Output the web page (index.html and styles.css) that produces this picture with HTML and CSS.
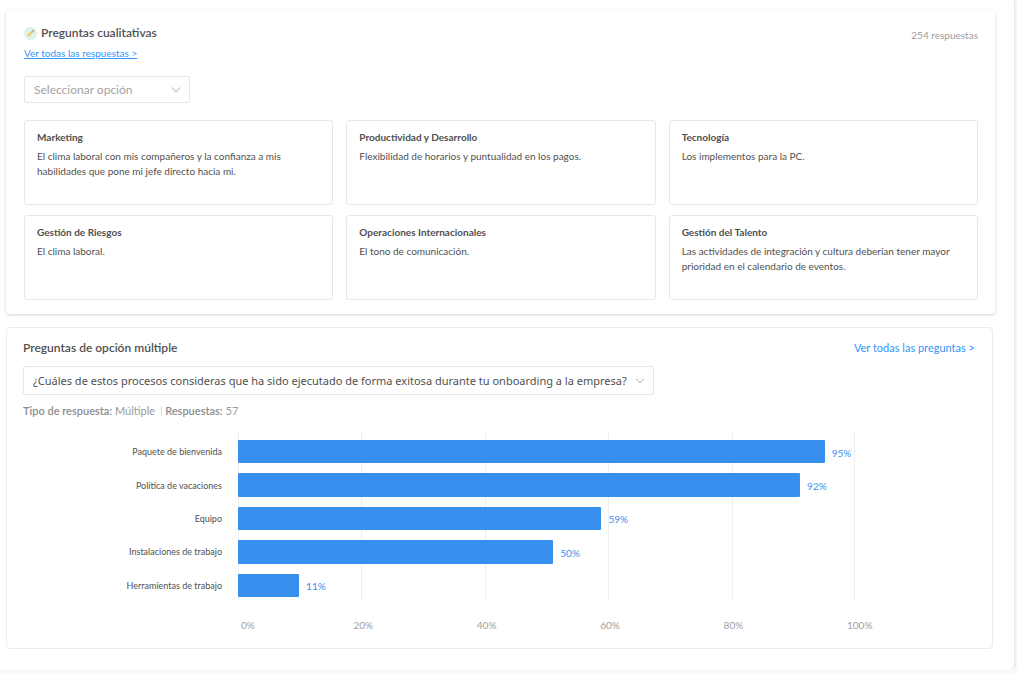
FILE: index.html
```html
<!DOCTYPE html>
<html lang="es">
<head>
<meta charset="utf-8">
<meta name="viewport" content="width=device-width, initial-scale=1">
<title>Resultados de encuesta</title>
<link rel="stylesheet" href="styles.css">
</head>
<body>
<main class="panel">
  <section class="card card-raised">
    <header class="card-head">
      <div class="head-left">
        <h2 class="title">
          <svg class="pencil" viewBox="0 0 26 26" aria-hidden="true">
            <circle cx="13" cy="13" r="13" fill="#dcf3ec"/>
            <path d="M6 20l1.500-4 2.500 2.500z" fill="#e9c9a0"/>
            <path d="M7.500 16l8-8 2.500 2.500-8 8z" fill="#fbbf3c"/>
            <path d="M15.500 8l1-1 2.500 2.500-1 1z" fill="#b9c3c9"/>
            <path d="M16.500 7l1-1q1-.6 1.700.2l.6.600q.8.900.2 1.700l-1 1z" fill="#ee5a52"/>
          </svg>
          Preguntas cualitativas
        </h2>
        <a class="link link-underlined" href="#respuestas">Ver todas las respuestas &gt;</a>
      </div>
      <span class="count">254 respuestas</span>
    </header>
    <div class="select select-small">
      <select aria-label="Seleccionar opción"><option>Seleccionar opción</option></select>
      <svg class="chevron" viewBox="0 0 10 6" aria-hidden="true"><path d="M1 .5l4 4.500 4-4.500"/></svg>
    </div>
    <div class="answers">
      <article class="answer"><h3>Marketing</h3><p>El clima laboral con mis compañeros y la confianza a mis habilidades que pone mi jefe directo hacia mi.</p></article>
      <article class="answer"><h3>Productividad y Desarrollo</h3><p>Flexibilidad de horarios y puntualidad en los pagos.</p></article>
      <article class="answer"><h3>Tecnología</h3><p>Los implementos para la PC.</p></article>
      <article class="answer"><h3>Gestión de Riesgos</h3><p>El clima laboral.</p></article>
      <article class="answer"><h3>Operaciones Internacionales</h3><p>El tono de comunicación.</p></article>
      <article class="answer"><h3>Gestión del Talento</h3><p>Las actividades de integración y cultura deberían tener mayor prioridad en el calendario de eventos.</p></article>
    </div>
  </section>

  <section class="card card-flat">
    <header class="card-head">
      <h2 class="title">Preguntas de opción múltiple</h2>
      <a class="link link-large" href="#preguntas">Ver todas las preguntas &gt;</a>
    </header>
    <div class="select select-large">
      <select aria-label="Pregunta"><option>¿Cuáles de estos procesos consideras que ha sido ejecutado de forma exitosa durante tu onboarding a la empresa?</option></select>
      <svg class="chevron" viewBox="0 0 10 6" aria-hidden="true"><path d="M1 .5l4 4.500 4-4.500"/></svg>
    </div>
    <p class="meta"><span><b>Tipo de respuesta:</b> Múltiple</span><span class="meta-next"><b>Respuestas:</b> 57</span></p>
    <div class="chart">
      <div class="labels">
        <span>Paquete de bienvenida</span>
        <span>Política de vacaciones</span>
        <span>Equipo</span>
        <span>Instalaciones de trabajo</span>
        <span>Herramientas de trabajo</span>
      </div>
      <div class="plot">
        <div class="gridlines"><i></i><i></i><i></i><i></i><i></i></div>
        <div class="bars">
          <div class="row"><div class="bar" style="width:95.1%"></div><span>95%</span></div>
          <div class="row"><div class="bar" style="width:91.1%"></div><span>92%</span></div>
          <div class="row"><div class="bar" style="width:58.9%"></div><span>59%</span></div>
          <div class="row"><div class="bar" style="width:51.1%"></div><span>50%</span></div>
          <div class="row"><div class="bar" style="width:9.9%"></div><span>11%</span></div>
        </div>
      </div>
      <div class="axis"><span>0%</span><span>20%</span><span>40%</span><span>60%</span><span>80%</span><span>100%</span></div>
    </div>
  </section>
</main>
</body>
</html>
```
FILE: styles.css
```css
* { box-sizing: border-box; }

body {
  margin: 0;
  background: #f9f9f9;
  color: #505050;
  font-family: Lato, "Open Sans", sans-serif;
  font-size: 10px;
  line-height: 15px;
}

h2, h3, p { margin: 0; }

.panel {
  display: flex;
  flex-direction: column;
  gap: 13px;
  margin-right: 3px;
  padding: 10px 19px 20px 6px;
  background: #fff;
  border-radius: 0 0 4px 0;
  box-shadow: 0 0 3px rgba(0, 0, 0, .22);
}

.card { background: #fff; border-radius: 4px; }

.card-raised {
  padding: 14px 17px 14px 18px;
  box-shadow: 0 1px 3px rgba(0, 0, 0, .18);
}

.card-flat {
  margin-right: 2px;
  padding: 11px 17px 15px 16px;
  border: 1px solid #ebebeb;
}

.card-head {
  display: flex;
  justify-content: space-between;
  align-items: flex-start;
}

.head-left { display: flex; flex-direction: column; align-items: flex-start; gap: 3px; }

.title {
  display: flex;
  align-items: center;
  gap: 4px;
  font-size: 12px;
  font-weight: 600;
  line-height: 18px;
}

.pencil { width: 13px; height: 13px; }

.link { color: #2f96fa; text-decoration: none; }
.link-underlined { line-height: 16px; text-decoration: underline; }
.link-large { font-size: 11px; line-height: 18px; }
.count { color: #9b9b9b; line-height: 22px; }

.select { position: relative; max-width: 100%; }

.select select {
  display: block;
  width: 100%;
  height: 100%;
  padding: 0 24px 0 9px;
  border: 1px solid #e6e6e6;
  border-radius: 2px;
  appearance: none;
  background: #fff;
  color: inherit;
  font: inherit;
}

.chevron {
  position: absolute;
  top: 50%;
  right: 9px;
  width: 10px;
  height: 6px;
  margin-top: -3px;
  fill: none;
  stroke: #aaa;
  pointer-events: none;
}

.select-small {
  width: 166px;
  height: 27px;
  margin-top: 15px;
  color: #a3a3a3;
  font-size: 12px;
}

.select-large {
  width: 631px;
  height: 29px;
  margin-top: 9px;
  font-family: "Noto Sans", sans-serif;
  font-size: 11px;
}

.answers {
  display: grid;
  grid-template-columns: repeat(3, 1fr);
  gap: 10px 13px;
  margin-top: 17px;
}

.answer {
  min-height: 85px;
  padding: 9px 12px;
  border: 1px solid #e8e8e8;
  border-radius: 3px;
}

.answer h3 { margin-bottom: 4px; font-size: 10px; font-weight: 700; line-height: 15px; }

.meta {
  display: flex;
  gap: 6px;
  margin-top: 7px;
  color: #999;
  font-size: 11px;
  line-height: 18px;
}

.meta b { font-weight: 600; color: #8e8e8e; }
.meta-next { display: flex; gap: 3px; align-items: center; }
.meta-next::before { content: ""; width: 1px; height: 10px; background: #ddd; }

.chart {
  display: grid;
  grid-template-columns: 199px 1fr 120px;
  column-gap: 16px;
  margin-top: 12px;
  margin-right: -16px;
  font-size: 9px;
}

.labels, .bars {
  display: grid;
  grid-auto-rows: 1fr;
  gap: 10px;
  min-height: 168px;
  padding: 8px 0 3px;
}

.labels { align-items: center; text-align: right; }

.plot { position: relative; }

.gridlines {
  position: absolute;
  inset: 0;
  display: grid;
  grid-template-columns: repeat(5, 1fr);
}

.gridlines i { border-left: 1px solid #eee; }
.gridlines i:last-child { border-right: 1px solid #eee; }

.bars { position: relative; color: #3790ee; font-size: 10px; }
.row { display: flex; align-items: center; gap: 7px; }
.row span { margin-right: -30px; padding-top: 3px; }

.bar {
  flex: none;
  height: 100%;
  border-radius: 1px;
  background: #3790ee;
}

.axis {
  grid-column: 2;
  display: grid;
  grid-template-columns: repeat(5, 1fr) 0;
  margin-top: 17px;
  color: #a0a0a0;
  font-size: 10px;
  line-height: 16px;
}

.axis span { margin-left: -8px; white-space: nowrap; }
.axis span:first-child { margin-left: 3px; }
```
